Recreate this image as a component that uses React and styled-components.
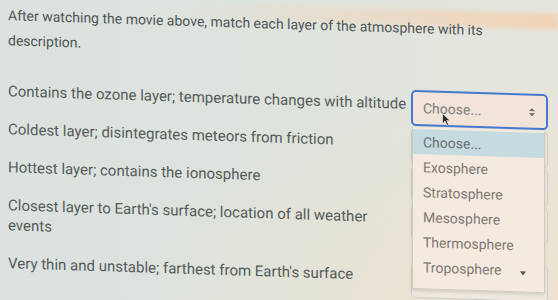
import styled, { createGlobalStyle } from "styled-components"

const GlobalStyle = createGlobalStyle`
  body {
    margin: 0;
    font-family: Roboto, "Liberation Sans", sans-serif;
  }
`

const Page = styled.div`
  position: relative;
  width: 558px;
  height: 300px;
  overflow: hidden;
  background:
    radial-gradient(ellipse 420px 220px at 100% 100%, rgba(238, 226, 205, 0.9), rgba(238, 226, 205, 0)),
    linear-gradient(90deg, #dbe2df 0%, #dee3dd 55%, #e6e5dc 100%);

  &::before {
    content: "";
    position: absolute;
    left: 0;
    top: -2px;
    right: 0;
    height: 16px;
    background: linear-gradient(90deg, rgba(242, 214, 186, 0) 32%, rgba(242, 212, 184, 1) 100%);
    transform: skewY(1.6deg);
    transform-origin: 0 0;
    filter: blur(2px);
  }
`

const Sheet = styled.div`
  position: relative;
  padding: 3px 0 0 8px;
  transform: skewY(1.8deg);
  transform-origin: 0 0;
  color: #565c5b;
`

const Title = styled.p`
  margin: 0 0 20px;
  width: 500px;
  font-size: 14px;
  line-height: 25px;
  color: #4f5554;
`

const Row = styled.div`
  display: grid;
  grid-template-columns: 403px 137px;
  align-items: start;
  margin-bottom: 2px;
`

const Question = styled.div`
  padding: 8px 0;
  font-size: 15px;
  line-height: 20px;
  width: ${(p) => p.$width || 403}px;
`

const Select = styled.div`
  position: relative;
  box-sizing: border-box;
  height: 36px;
  margin: 4px 0 -4px;
  padding: 0 10px;
  display: flex;
  align-items: center;
  justify-content: space-between;
  border: ${(p) => (p.$focus ? "2px solid #4379cf" : "1px solid #cdcdc6")};
  border-radius: 5px;
  background: ${(p) => (p.$focus ? "#f3e4da" : "#efe8df")};
  font-size: 14px;
  color: #7d7f7c;
`

const Arrows = styled.svg`
  width: 8px;
  height: 11px;
  flex: none;
`

const Cursor = styled.svg`
  position: absolute;
  left: 29px;
  top: 20px;
  width: 9px;
  height: 13px;
`

const List = styled.div`
  position: absolute;
  left: 412px;
  top: 114px;
  width: 133px;
  height: 162px;
  box-sizing: border-box;
  padding-top: 2px;
  overflow: hidden;
  background: #f5eadf;
  border: 1px solid #cfcac2;
  border-top: none;
  box-shadow: 0 2px 3px rgba(120, 110, 100, 0.22);
  z-index: 2;
`

const Option = styled.div`
  height: 25px;
  display: flex;
  align-items: center;
  padding-left: 10px;
  font-size: 14px;
  color: ${(p) => (p.$active ? "#667274" : "#7e7874")};
  background: ${(p) => (p.$active ? "#c6dbdf" : "transparent")};
`

const ScrollArrow = styled.span`
  position: absolute;
  right: 18px;
  bottom: 16px;
  width: 0;
  height: 0;
  border-left: 3px solid transparent;
  border-right: 3px solid transparent;
  border-top: 4px solid #555;
`

const questions = [
  { text: "Contains the ozone layer; temperature changes with altitude" },
  { text: "Coldest layer; disintegrates meteors from friction" },
  { text: "Hottest layer; contains the ionosphere" },
  { text: "Closest layer to Earth's surface; location of all weather events", width: 380 },
  { text: "Very thin and unstable; farthest from Earth's surface" },
]

const options = ["Choose...", "Exosphere", "Stratosphere", "Mesosphere", "Thermosphere", "Troposphere"]

function UpDown() {
  return (
    <Arrows viewBox="0 0 8 11">
      <path d="M1 4.5 L4 1.5 L7 4.5 Z M1 6.5 L4 9.5 L7 6.5 Z" fill="#6a6a6a" />
    </Arrows>
  )
}

function App() {
  return (
    <Page>
      <GlobalStyle />
      <Sheet>
        <Title>
          After watching the movie above, match each layer of the atmosphere with its description.
        </Title>
        {questions.map((q, i) => (
          <Row key={i}>
            <Question $width={q.width}>{q.text}</Question>
            <Select $focus={i === 0}>
              Choose...
              <UpDown />
              {i === 0 && (
                <Cursor viewBox="0 0 9 13">
                  <path d="M0.5 0.5 L0.5 10.5 L3 8 L5 12.3 L6.6 11.6 L4.7 7.5 L8 7.5 Z" fill="#2a2a2a" stroke="#eee" strokeWidth="0.6" />
                </Cursor>
              )}
            </Select>
          </Row>
        ))}
        <List>
          {options.map((o, i) => (
            <Option key={o} $active={i === 0}>{o}</Option>
          ))}
          <ScrollArrow />
        </List>
      </Sheet>
    </Page>
  )
}

export default App
